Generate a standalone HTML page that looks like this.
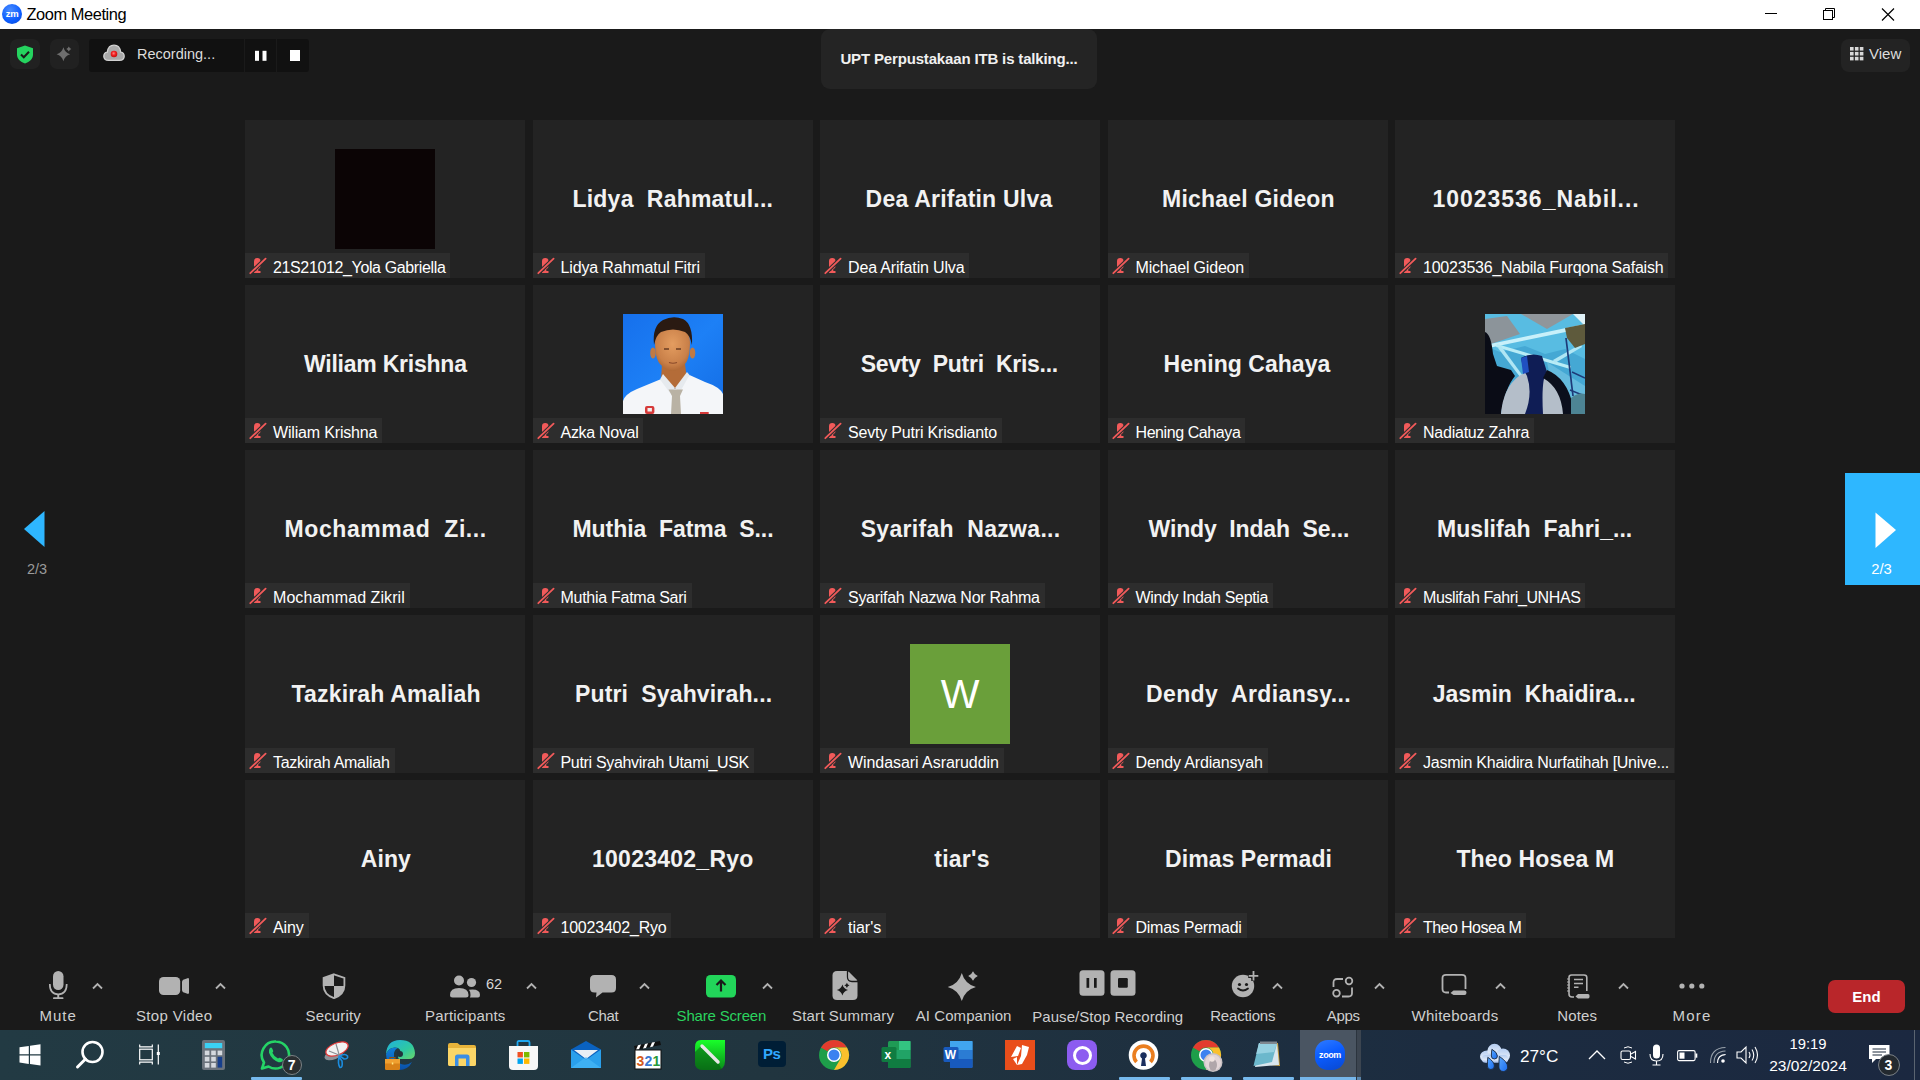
<!DOCTYPE html>
<html><head><meta charset="utf-8"><title>Zoom Meeting</title>
<style>
*{box-sizing:border-box}
html,body{margin:0;padding:0;width:1920px;height:1080px;overflow:hidden;background:#1a1a1a;font-family:'Liberation Sans',sans-serif;}
.ab{position:absolute}
.tile{position:absolute;width:280px;height:158px;background:#232323}
.ph{position:absolute;left:90px;top:29px;width:100px;height:100px;overflow:hidden;font-family:'Liberation Sans',sans-serif;}
.bn{position:absolute;top:62px;color:#f2f2f2;font-weight:bold;font-size:23px;line-height:34px;white-space:nowrap}
.lb{position:absolute;left:0;top:133px;height:25px;background:#2d2d2d;padding:1.5px 5px 0 28px;color:#fff;font-size:16px;line-height:25px;white-space:nowrap}
.mm{position:absolute;left:4px;top:4px}
.tl{position:absolute;font-size:15px;line-height:20px;white-space:nowrap}
</style></head><body>
<!-- title bar -->
<div class="ab" style="left:0;top:0;width:1920px;height:29px;background:#fff"></div>
<div class="ab" style="left:2px;top:4px;width:20px;height:20px;border-radius:50%;background:radial-gradient(circle at 40% 30%,#4a8cff,#0b5cff 60%,#0845c8);color:#fff;font-size:9.5px;line-height:20px;text-align:center;font-weight:bold;letter-spacing:-0.3px">zm</div>
<div class="ab" style="left:26.5px;top:5px;font-size:16.4px;letter-spacing:-0.42px;line-height:18px;color:#000">Zoom Meeting</div>
<svg class="ab" style="left:1760px;top:8px" width="140" height="14" viewBox="0 0 140 14">
<line x1="5" y1="5.5" x2="17" y2="5.5" stroke="#000" stroke-width="1"/>
<rect x="63.5" y="2.5" width="9" height="9" fill="none" stroke="#000" stroke-width="1"/>
<path d="M65.5 2.5 V0.5 H74.5 V9.5 H72.5" fill="none" stroke="#000" stroke-width="1"/>
<path d="M122 0.5 L134 12.5 M134 0.5 L122 12.5" stroke="#000" stroke-width="1.15"/></svg>

<!-- top bar -->
<div class="ab" style="left:10px;top:39px;width:30px;height:30px;border-radius:7px;background:#212121"></div>
<svg class="ab" style="left:16px;top:45px" width="18" height="19" viewBox="0 0 18 19">
<path d="M9 0.5 L17 3.3 V9.5 C17 13.8 13.8 16.8 9 18.5 C4.2 16.8 1 13.8 1 9.5 V3.3 Z" fill="#25d35f"/>
<path d="M5 9.5 L7.8 12.3 L13 6.8" stroke="#1a1a1a" stroke-width="2" fill="none"/></svg>
<div class="ab" style="left:50px;top:39px;width:29px;height:30px;border-radius:7px;background:#212121"></div>
<svg class="ab" style="left:55px;top:45px" width="20" height="19" viewBox="0 0 20 19">
<path d="M8.40 2.30 Q9.90 7.76 15.20 9.30 Q9.90 10.84 8.40 16.30 Q6.90 10.84 1.60 9.30 Q6.90 7.76 8.40 2.30 Z" fill="#6e6e6e"/>
<path d="M13.80 1.40 Q14.55 3.15 16.30 3.90 Q14.55 4.65 13.80 6.40 Q13.05 4.65 11.30 3.90 Q13.05 3.15 13.80 1.40 Z" fill="#6e6e6e"/></svg>
<div class="ab" style="left:89px;top:39px;width:220px;height:33px;border-radius:3px;background:#111111"></div>
<div class="ab" style="left:244px;top:39px;width:1px;height:33px;background:#1a1a1a"></div>
<div class="ab" style="left:276px;top:39px;width:1px;height:33px;background:#1a1a1a"></div>
<svg class="ab" style="left:101.5px;top:44px" width="24" height="18" viewBox="0 0 24 18">
<defs><radialGradient id="rdot" cx="0.45" cy="0.4" r="0.6"><stop offset="0" stop-color="#ff8080"/><stop offset="0.5" stop-color="#f02020"/><stop offset="1" stop-color="#c01010"/></radialGradient></defs>
<path d="M6.5 16.3 Q1.8 16.3 1.8 12.2 Q1.8 8.6 5.3 8.1 Q6.3 1.2 12 1.2 Q17.7 1.2 18.7 8.1 Q22.2 8.6 22.2 12.2 Q22.2 16.3 17.5 16.3 Z" fill="#a9a9a9" stroke="#d2d2d2" stroke-width="1.3"/>
<circle cx="12" cy="10" r="3.3" fill="url(#rdot)"/></svg>
<div class="ab" style="left:137px;top:45px;font-size:14.5px;line-height:18px;color:#dcdcdc">Recording...</div>
<svg class="ab" style="left:254px;top:50px" width="14" height="12" viewBox="0 0 14 12">
<rect x="1" y="0.8" width="4" height="10" fill="#fff"/><rect x="8.5" y="0.8" width="4" height="10" fill="#fff"/></svg>
<div class="ab" style="left:289.5px;top:50px;width:10.5px;height:10.5px;background:#fff"></div>

<div class="ab" style="left:821px;top:29px;width:276px;height:60px;border-radius:9px;background:#242424"></div>
<div class="ab" style="left:821px;top:49px;width:276px;text-align:center;font-weight:bold;font-size:15px;letter-spacing:-0.16px;line-height:20px;color:#f0f0f0">UPT Perpustakaan ITB is talking...</div>

<div class="ab" style="left:1841px;top:39px;width:69px;height:33px;border-radius:8px;background:#232323"></div>
<svg class="ab" style="left:1850px;top:46.5px" width="14" height="14" viewBox="0 0 14 14">
<g fill="#d8d8d8"><rect x="0" y="0" width="3.6" height="3.6"/><rect x="4.9" y="0" width="3.6" height="3.6"/><rect x="9.8" y="0" width="3.6" height="3.6"/>
<rect x="0" y="4.9" width="3.6" height="3.6"/><rect x="4.9" y="4.9" width="3.6" height="3.6"/><rect x="9.8" y="4.9" width="3.6" height="3.6"/>
<rect x="0" y="9.8" width="3.6" height="3.6"/><rect x="4.9" y="9.8" width="3.6" height="3.6"/><rect x="9.8" y="9.8" width="3.6" height="3.6"/></g></svg>
<div class="ab" style="left:1869px;top:45px;font-size:15px;line-height:18px;color:#dcdcdc">View</div>

<!-- tiles -->
<div class="tile" style="left:245.0px;top:120px"><div class="ph" style="background:#0b0405"></div><div class="lb"><svg class="mm" width="18" height="18" viewBox="0 0 18 18"><rect x="5" y="1" width="6.5" height="11" rx="3.2" fill="#f25a5a"/><rect x="5" y="14" width="6.5" height="2" fill="#f25a5a"/><rect x="7.3" y="11" width="2" height="4" fill="#f25a5a"/><line x1="1.3" y1="16.2" x2="16.6" y2="1.6" stroke="#2d2d2d" stroke-width="4"/><line x1="1.3" y1="16.2" x2="16.6" y2="1.6" stroke="#f25a5a" stroke-width="1.8" stroke-linecap="round"/></svg><span style="letter-spacing:-0.368px">21S21012_Yola Gabriella</span></div></div><div class="tile" style="left:532.5px;top:120px"><div class="bn" style="left:40.00px;letter-spacing:0.212px">Lidya&nbsp; Rahmatul...</div><div class="lb"><svg class="mm" width="18" height="18" viewBox="0 0 18 18"><rect x="5" y="1" width="6.5" height="11" rx="3.2" fill="#f25a5a"/><rect x="5" y="14" width="6.5" height="2" fill="#f25a5a"/><rect x="7.3" y="11" width="2" height="4" fill="#f25a5a"/><line x1="1.3" y1="16.2" x2="16.6" y2="1.6" stroke="#2d2d2d" stroke-width="4"/><line x1="1.3" y1="16.2" x2="16.6" y2="1.6" stroke="#f25a5a" stroke-width="1.8" stroke-linecap="round"/></svg><span style="letter-spacing:-0.145px">Lidya Rahmatul Fitri</span></div></div><div class="tile" style="left:820.0px;top:120px"><div class="bn" style="left:45.60px;letter-spacing:0.213px">Dea Arifatin Ulva</div><div class="lb"><svg class="mm" width="18" height="18" viewBox="0 0 18 18"><rect x="5" y="1" width="6.5" height="11" rx="3.2" fill="#f25a5a"/><rect x="5" y="14" width="6.5" height="2" fill="#f25a5a"/><rect x="7.3" y="11" width="2" height="4" fill="#f25a5a"/><line x1="1.3" y1="16.2" x2="16.6" y2="1.6" stroke="#2d2d2d" stroke-width="4"/><line x1="1.3" y1="16.2" x2="16.6" y2="1.6" stroke="#f25a5a" stroke-width="1.8" stroke-linecap="round"/></svg><span style="letter-spacing:-0.162px">Dea Arifatin Ulva</span></div></div><div class="tile" style="left:1107.5px;top:120px"><div class="bn" style="left:54.60px;letter-spacing:0.200px">Michael Gideon</div><div class="lb"><svg class="mm" width="18" height="18" viewBox="0 0 18 18"><rect x="5" y="1" width="6.5" height="11" rx="3.2" fill="#f25a5a"/><rect x="5" y="14" width="6.5" height="2" fill="#f25a5a"/><rect x="7.3" y="11" width="2" height="4" fill="#f25a5a"/><line x1="1.3" y1="16.2" x2="16.6" y2="1.6" stroke="#2d2d2d" stroke-width="4"/><line x1="1.3" y1="16.2" x2="16.6" y2="1.6" stroke="#f25a5a" stroke-width="1.8" stroke-linecap="round"/></svg><span style="letter-spacing:-0.188px">Michael Gideon</span></div></div><div class="tile" style="left:1395.0px;top:120px"><div class="bn" style="left:37.40px;letter-spacing:0.988px">10023536_Nabil...</div><div class="lb"><svg class="mm" width="18" height="18" viewBox="0 0 18 18"><rect x="5" y="1" width="6.5" height="11" rx="3.2" fill="#f25a5a"/><rect x="5" y="14" width="6.5" height="2" fill="#f25a5a"/><rect x="7.3" y="11" width="2" height="4" fill="#f25a5a"/><line x1="1.3" y1="16.2" x2="16.6" y2="1.6" stroke="#2d2d2d" stroke-width="4"/><line x1="1.3" y1="16.2" x2="16.6" y2="1.6" stroke="#f25a5a" stroke-width="1.8" stroke-linecap="round"/></svg><span style="letter-spacing:-0.223px">10023536_Nabila Furqona Safaish</span></div></div><div class="tile" style="left:245.0px;top:285px"><div class="bn" style="left:59.00px;letter-spacing:-0.231px">Wiliam Krishna</div><div class="lb"><svg class="mm" width="18" height="18" viewBox="0 0 18 18"><rect x="5" y="1" width="6.5" height="11" rx="3.2" fill="#f25a5a"/><rect x="5" y="14" width="6.5" height="2" fill="#f25a5a"/><rect x="7.3" y="11" width="2" height="4" fill="#f25a5a"/><line x1="1.3" y1="16.2" x2="16.6" y2="1.6" stroke="#2d2d2d" stroke-width="4"/><line x1="1.3" y1="16.2" x2="16.6" y2="1.6" stroke="#f25a5a" stroke-width="1.8" stroke-linecap="round"/></svg><span style="letter-spacing:-0.173px">Wiliam Krishna</span></div></div><div class="tile" style="left:532.5px;top:285px"><div class="ph" style="background:#1b7af0"><svg width="100" height="100" viewBox="0 0 100 100" style="filter:blur(0.5px)"><defs><linearGradient id="azbg" x1="0" y1="0" x2="1" y2="1"><stop offset="0" stop-color="#1670ec"/><stop offset="0.5" stop-color="#1d80f6"/><stop offset="1" stop-color="#136ce4"/></linearGradient><radialGradient id="azsk" cx="0.5" cy="0.4" r="0.65"><stop offset="0" stop-color="#e49d60"/><stop offset="0.7" stop-color="#c98049"/><stop offset="1" stop-color="#a8622f"/></radialGradient></defs><rect width="100" height="100" fill="url(#azbg)"/><path d="M39 50 L62 50 L64 66 L52 75 L38 66 Z" fill="#b46c38"/><path d="M0 100 L0 87 Q2 80 14 75 L37 65.5 L52 75 L66.5 61 L82 68 Q97 73 100 80 L100 100 Z" fill="#f4f6f9"/><path d="M37 65.5 L40 60 L52 74 L47 79 Z" fill="#e6eaee"/><path d="M66.5 61 L64 58 L52 74 L57 78 Z" fill="#e6eaee"/><path d="M45.5 75.5 L60 75.5 L57 82 L58 100 L48 100 L49 82 Z" fill="#b9b2a4"/><ellipse cx="30" cy="39" rx="2.8" ry="5.5" fill="#c07a44"/><ellipse cx="69.5" cy="39" rx="2.8" ry="5.5" fill="#c07a44"/><path d="M32 28 Q32 46 38 51 Q44 57 49.5 57 Q55 57 61 51 Q67 46 67 28 Q67 12 49.5 12 Q32 12 32 28 Z" fill="url(#azsk)"/><path d="M31 31 Q29 12 40 6 Q50 1 60 5 Q70 10 69 31 Q67 21 62 18 Q50 13 38 18 Q33 21 31 31 Z" fill="#2a1a12"/><path d="M41 35 H46 M53 35 H58" stroke="#6a3c22" stroke-width="1.4"/><path d="M46 48.5 Q50 50 54 48.5" stroke="#8a4a2a" stroke-width="1.1" fill="none"/><rect x="22" y="92" width="9.4" height="8" rx="2" fill="#d63a3a"/><rect x="24.5" y="94" width="4.4" height="3.5" fill="#f0f0f0"/><rect x="77" y="98" width="8.7" height="2" fill="#d63a3a"/></svg></div><div class="lb"><svg class="mm" width="18" height="18" viewBox="0 0 18 18"><rect x="5" y="1" width="6.5" height="11" rx="3.2" fill="#f25a5a"/><rect x="5" y="14" width="6.5" height="2" fill="#f25a5a"/><rect x="7.3" y="11" width="2" height="4" fill="#f25a5a"/><line x1="1.3" y1="16.2" x2="16.6" y2="1.6" stroke="#2d2d2d" stroke-width="4"/><line x1="1.3" y1="16.2" x2="16.6" y2="1.6" stroke="#f25a5a" stroke-width="1.8" stroke-linecap="round"/></svg><span style="letter-spacing:-0.294px">Azka Noval</span></div></div><div class="tile" style="left:820.0px;top:285px"><div class="bn" style="left:40.70px;letter-spacing:-0.290px">Sevty&nbsp; Putri&nbsp; Kris...</div><div class="lb"><svg class="mm" width="18" height="18" viewBox="0 0 18 18"><rect x="5" y="1" width="6.5" height="11" rx="3.2" fill="#f25a5a"/><rect x="5" y="14" width="6.5" height="2" fill="#f25a5a"/><rect x="7.3" y="11" width="2" height="4" fill="#f25a5a"/><line x1="1.3" y1="16.2" x2="16.6" y2="1.6" stroke="#2d2d2d" stroke-width="4"/><line x1="1.3" y1="16.2" x2="16.6" y2="1.6" stroke="#f25a5a" stroke-width="1.8" stroke-linecap="round"/></svg><span style="letter-spacing:-0.183px">Sevty Putri Krisdianto</span></div></div><div class="tile" style="left:1107.5px;top:285px"><div class="bn" style="left:56.10px;letter-spacing:0.050px">Hening Cahaya</div><div class="lb"><svg class="mm" width="18" height="18" viewBox="0 0 18 18"><rect x="5" y="1" width="6.5" height="11" rx="3.2" fill="#f25a5a"/><rect x="5" y="14" width="6.5" height="2" fill="#f25a5a"/><rect x="7.3" y="11" width="2" height="4" fill="#f25a5a"/><line x1="1.3" y1="16.2" x2="16.6" y2="1.6" stroke="#2d2d2d" stroke-width="4"/><line x1="1.3" y1="16.2" x2="16.6" y2="1.6" stroke="#f25a5a" stroke-width="1.8" stroke-linecap="round"/></svg><span style="letter-spacing:-0.417px">Hening Cahaya</span></div></div><div class="tile" style="left:1395.0px;top:285px"><div class="ph" style="background:#49aad4"><svg width="100" height="100" viewBox="0 0 100 100" style="filter:blur(0.5px)"><rect width="100" height="100" fill="#45a8d4"/><path d="M0 0 H100 V45 L80 35 L60 40 L40 32 L15 38 L0 32 Z" fill="#58bce2"/><path d="M0 5 L22 2 L35 20 L6 30 L0 28 Z" fill="#8c949a"/><path d="M36 0 L88 0 L62 15 Z" fill="#90969b"/><path d="M88 0 H100 V12 Z" fill="#e0f2f8"/><path d="M5 30 L100 10 L100 14 L6 33.5 Z" fill="#c8f0fa"/><path d="M12 30 L86 52 L85 55 L11 33 Z" fill="#b8ecf6"/><path d="M16 32 L38 62 L35 63 L13 34 Z" fill="#b0e6f4"/><path d="M68 46 L96 30 L97 33 L70 49 Z" fill="#b0e6f4"/><path d="M62 48 L100 72 L100 100 L72 100 Z" fill="#7fcbe6" opacity="0.55"/><path d="M80 14 L100 10 L100 30 L90 34 L82 24 Z" fill="#5e5a3c"/><path d="M81 24 L88 82" stroke="#1d3a78" stroke-width="1.7"/><path d="M87 58 L100 64 M85 76 L100 82" stroke="#1d3a78" stroke-width="1.4"/><path d="M0 18 Q6 20 8 40 L12 52 L26 56 L30 62 Q20 74 16 100 L0 100 Z" fill="#0a0c16"/><path d="M16 100 Q18 74 34 62 Q50 52 66 58 Q84 70 86 100 Z" fill="#b4bec9"/><path d="M36 44 Q46 38 57 42 L62 58 Q56 64 58 100 L40 100 Q48 80 42 62 Q38 56 36 44 Z" fill="#0f1d55"/><path d="M36 44 L42 42 L44 58 L38 60 Z" fill="#2050c0"/><path d="M62 56 Q82 64 88 92 L86 100 L78 100 Q76 74 58 64 Z" fill="#0b0f1c"/><path d="M86 84 Q93 78 100 80 L100 100 L86 100 Z" fill="#4d8494"/></svg></div><div class="lb"><svg class="mm" width="18" height="18" viewBox="0 0 18 18"><rect x="5" y="1" width="6.5" height="11" rx="3.2" fill="#f25a5a"/><rect x="5" y="14" width="6.5" height="2" fill="#f25a5a"/><rect x="7.3" y="11" width="2" height="4" fill="#f25a5a"/><line x1="1.3" y1="16.2" x2="16.6" y2="1.6" stroke="#2d2d2d" stroke-width="4"/><line x1="1.3" y1="16.2" x2="16.6" y2="1.6" stroke="#f25a5a" stroke-width="1.8" stroke-linecap="round"/></svg><span style="letter-spacing:-0.235px">Nadiatuz Zahra</span></div></div><div class="tile" style="left:245.0px;top:450px"><div class="bn" style="left:39.60px;letter-spacing:0.573px">Mochammad&nbsp; Zi...</div><div class="lb"><svg class="mm" width="18" height="18" viewBox="0 0 18 18"><rect x="5" y="1" width="6.5" height="11" rx="3.2" fill="#f25a5a"/><rect x="5" y="14" width="6.5" height="2" fill="#f25a5a"/><rect x="7.3" y="11" width="2" height="4" fill="#f25a5a"/><line x1="1.3" y1="16.2" x2="16.6" y2="1.6" stroke="#2d2d2d" stroke-width="4"/><line x1="1.3" y1="16.2" x2="16.6" y2="1.6" stroke="#f25a5a" stroke-width="1.8" stroke-linecap="round"/></svg><span style="letter-spacing:0.070px">Mochammad Zikril</span></div></div><div class="tile" style="left:532.5px;top:450px"><div class="bn" style="left:40.00px;letter-spacing:-0.046px">Muthia&nbsp; Fatma&nbsp; S...</div><div class="lb"><svg class="mm" width="18" height="18" viewBox="0 0 18 18"><rect x="5" y="1" width="6.5" height="11" rx="3.2" fill="#f25a5a"/><rect x="5" y="14" width="6.5" height="2" fill="#f25a5a"/><rect x="7.3" y="11" width="2" height="4" fill="#f25a5a"/><line x1="1.3" y1="16.2" x2="16.6" y2="1.6" stroke="#2d2d2d" stroke-width="4"/><line x1="1.3" y1="16.2" x2="16.6" y2="1.6" stroke="#f25a5a" stroke-width="1.8" stroke-linecap="round"/></svg><span style="letter-spacing:-0.275px">Muthia Fatma Sari</span></div></div><div class="tile" style="left:820.0px;top:450px"><div class="bn" style="left:40.70px;letter-spacing:0.306px">Syarifah&nbsp; Nazwa...</div><div class="lb"><svg class="mm" width="18" height="18" viewBox="0 0 18 18"><rect x="5" y="1" width="6.5" height="11" rx="3.2" fill="#f25a5a"/><rect x="5" y="14" width="6.5" height="2" fill="#f25a5a"/><rect x="7.3" y="11" width="2" height="4" fill="#f25a5a"/><line x1="1.3" y1="16.2" x2="16.6" y2="1.6" stroke="#2d2d2d" stroke-width="4"/><line x1="1.3" y1="16.2" x2="16.6" y2="1.6" stroke="#f25a5a" stroke-width="1.8" stroke-linecap="round"/></svg><span style="letter-spacing:-0.276px">Syarifah Nazwa Nor Rahma</span></div></div><div class="tile" style="left:1107.5px;top:450px"><div class="bn" style="left:41.00px;letter-spacing:-0.122px">Windy&nbsp; Indah&nbsp; Se...</div><div class="lb"><svg class="mm" width="18" height="18" viewBox="0 0 18 18"><rect x="5" y="1" width="6.5" height="11" rx="3.2" fill="#f25a5a"/><rect x="5" y="14" width="6.5" height="2" fill="#f25a5a"/><rect x="7.3" y="11" width="2" height="4" fill="#f25a5a"/><line x1="1.3" y1="16.2" x2="16.6" y2="1.6" stroke="#2d2d2d" stroke-width="4"/><line x1="1.3" y1="16.2" x2="16.6" y2="1.6" stroke="#f25a5a" stroke-width="1.8" stroke-linecap="round"/></svg><span style="letter-spacing:-0.344px">Windy Indah Septia</span></div></div><div class="tile" style="left:1395.0px;top:450px"><div class="bn" style="left:42.00px;letter-spacing:0.056px">Muslifah&nbsp; Fahri_...</div><div class="lb"><svg class="mm" width="18" height="18" viewBox="0 0 18 18"><rect x="5" y="1" width="6.5" height="11" rx="3.2" fill="#f25a5a"/><rect x="5" y="14" width="6.5" height="2" fill="#f25a5a"/><rect x="7.3" y="11" width="2" height="4" fill="#f25a5a"/><line x1="1.3" y1="16.2" x2="16.6" y2="1.6" stroke="#2d2d2d" stroke-width="4"/><line x1="1.3" y1="16.2" x2="16.6" y2="1.6" stroke="#f25a5a" stroke-width="1.8" stroke-linecap="round"/></svg><span style="letter-spacing:-0.397px">Muslifah Fahri_UNHAS</span></div></div><div class="tile" style="left:245.0px;top:615px"><div class="bn" style="left:46.60px;letter-spacing:0.160px">Tazkirah Amaliah</div><div class="lb"><svg class="mm" width="18" height="18" viewBox="0 0 18 18"><rect x="5" y="1" width="6.5" height="11" rx="3.2" fill="#f25a5a"/><rect x="5" y="14" width="6.5" height="2" fill="#f25a5a"/><rect x="7.3" y="11" width="2" height="4" fill="#f25a5a"/><line x1="1.3" y1="16.2" x2="16.6" y2="1.6" stroke="#2d2d2d" stroke-width="4"/><line x1="1.3" y1="16.2" x2="16.6" y2="1.6" stroke="#f25a5a" stroke-width="1.8" stroke-linecap="round"/></svg><span style="letter-spacing:-0.277px">Tazkirah Amaliah</span></div></div><div class="tile" style="left:532.5px;top:615px"><div class="bn" style="left:42.50px;letter-spacing:0.156px">Putri&nbsp; Syahvirah...</div><div class="lb"><svg class="mm" width="18" height="18" viewBox="0 0 18 18"><rect x="5" y="1" width="6.5" height="11" rx="3.2" fill="#f25a5a"/><rect x="5" y="14" width="6.5" height="2" fill="#f25a5a"/><rect x="7.3" y="11" width="2" height="4" fill="#f25a5a"/><line x1="1.3" y1="16.2" x2="16.6" y2="1.6" stroke="#2d2d2d" stroke-width="4"/><line x1="1.3" y1="16.2" x2="16.6" y2="1.6" stroke="#f25a5a" stroke-width="1.8" stroke-linecap="round"/></svg><span style="letter-spacing:-0.325px">Putri Syahvirah Utami_USK</span></div></div><div class="tile" style="left:820.0px;top:615px"><div class="ph" style="background:#6a9f3a;color:#fff;font-size:41px;line-height:100px;text-align:center">W</div><div class="lb"><svg class="mm" width="18" height="18" viewBox="0 0 18 18"><rect x="5" y="1" width="6.5" height="11" rx="3.2" fill="#f25a5a"/><rect x="5" y="14" width="6.5" height="2" fill="#f25a5a"/><rect x="7.3" y="11" width="2" height="4" fill="#f25a5a"/><line x1="1.3" y1="16.2" x2="16.6" y2="1.6" stroke="#2d2d2d" stroke-width="4"/><line x1="1.3" y1="16.2" x2="16.6" y2="1.6" stroke="#f25a5a" stroke-width="1.8" stroke-linecap="round"/></svg><span style="letter-spacing:-0.061px">Windasari Asraruddin</span></div></div><div class="tile" style="left:1107.5px;top:615px"><div class="bn" style="left:38.50px;letter-spacing:0.388px">Dendy&nbsp; Ardiansy...</div><div class="lb"><svg class="mm" width="18" height="18" viewBox="0 0 18 18"><rect x="5" y="1" width="6.5" height="11" rx="3.2" fill="#f25a5a"/><rect x="5" y="14" width="6.5" height="2" fill="#f25a5a"/><rect x="7.3" y="11" width="2" height="4" fill="#f25a5a"/><line x1="1.3" y1="16.2" x2="16.6" y2="1.6" stroke="#2d2d2d" stroke-width="4"/><line x1="1.3" y1="16.2" x2="16.6" y2="1.6" stroke="#f25a5a" stroke-width="1.8" stroke-linecap="round"/></svg><span style="letter-spacing:-0.170px">Dendy Ardiansyah</span></div></div><div class="tile" style="left:1395.0px;top:615px"><div class="bn" style="left:37.70px;letter-spacing:-0.011px">Jasmin&nbsp; Khaidira...</div><div class="lb"><svg class="mm" width="18" height="18" viewBox="0 0 18 18"><rect x="5" y="1" width="6.5" height="11" rx="3.2" fill="#f25a5a"/><rect x="5" y="14" width="6.5" height="2" fill="#f25a5a"/><rect x="7.3" y="11" width="2" height="4" fill="#f25a5a"/><line x1="1.3" y1="16.2" x2="16.6" y2="1.6" stroke="#2d2d2d" stroke-width="4"/><line x1="1.3" y1="16.2" x2="16.6" y2="1.6" stroke="#f25a5a" stroke-width="1.8" stroke-linecap="round"/></svg><span style="letter-spacing:-0.256px">Jasmin Khaidira Nurfatihah [Unive...</span></div></div><div class="tile" style="left:245.0px;top:780px"><div class="bn" style="left:115.80px;letter-spacing:0.067px">Ainy</div><div class="lb"><svg class="mm" width="18" height="18" viewBox="0 0 18 18"><rect x="5" y="1" width="6.5" height="11" rx="3.2" fill="#f25a5a"/><rect x="5" y="14" width="6.5" height="2" fill="#f25a5a"/><rect x="7.3" y="11" width="2" height="4" fill="#f25a5a"/><line x1="1.3" y1="16.2" x2="16.6" y2="1.6" stroke="#2d2d2d" stroke-width="4"/><line x1="1.3" y1="16.2" x2="16.6" y2="1.6" stroke="#f25a5a" stroke-width="1.8" stroke-linecap="round"/></svg><span style="letter-spacing:-0.117px">Ainy</span></div></div><div class="tile" style="left:532.5px;top:780px"><div class="bn" style="left:59.50px;letter-spacing:0.255px">10023402_Ryo</div><div class="lb"><svg class="mm" width="18" height="18" viewBox="0 0 18 18"><rect x="5" y="1" width="6.5" height="11" rx="3.2" fill="#f25a5a"/><rect x="5" y="14" width="6.5" height="2" fill="#f25a5a"/><rect x="7.3" y="11" width="2" height="4" fill="#f25a5a"/><line x1="1.3" y1="16.2" x2="16.6" y2="1.6" stroke="#2d2d2d" stroke-width="4"/><line x1="1.3" y1="16.2" x2="16.6" y2="1.6" stroke="#f25a5a" stroke-width="1.8" stroke-linecap="round"/></svg><span style="letter-spacing:-0.214px">10023402_Ryo</span></div></div><div class="tile" style="left:820.0px;top:780px"><div class="bn" style="left:114.20px;letter-spacing:0.280px">tiar's</div><div class="lb"><svg class="mm" width="18" height="18" viewBox="0 0 18 18"><rect x="5" y="1" width="6.5" height="11" rx="3.2" fill="#f25a5a"/><rect x="5" y="14" width="6.5" height="2" fill="#f25a5a"/><rect x="7.3" y="11" width="2" height="4" fill="#f25a5a"/><line x1="1.3" y1="16.2" x2="16.6" y2="1.6" stroke="#2d2d2d" stroke-width="4"/><line x1="1.3" y1="16.2" x2="16.6" y2="1.6" stroke="#f25a5a" stroke-width="1.8" stroke-linecap="round"/></svg><span style="letter-spacing:-0.010px">tiar's</span></div></div><div class="tile" style="left:1107.5px;top:780px"><div class="bn" style="left:57.60px;letter-spacing:0.050px">Dimas Permadi</div><div class="lb"><svg class="mm" width="18" height="18" viewBox="0 0 18 18"><rect x="5" y="1" width="6.5" height="11" rx="3.2" fill="#f25a5a"/><rect x="5" y="14" width="6.5" height="2" fill="#f25a5a"/><rect x="7.3" y="11" width="2" height="4" fill="#f25a5a"/><line x1="1.3" y1="16.2" x2="16.6" y2="1.6" stroke="#2d2d2d" stroke-width="4"/><line x1="1.3" y1="16.2" x2="16.6" y2="1.6" stroke="#f25a5a" stroke-width="1.8" stroke-linecap="round"/></svg><span style="letter-spacing:-0.250px">Dimas Permadi</span></div></div><div class="tile" style="left:1395.0px;top:780px"><div class="bn" style="left:61.40px;letter-spacing:0.164px">Theo Hosea M</div><div class="lb"><svg class="mm" width="18" height="18" viewBox="0 0 18 18"><rect x="5" y="1" width="6.5" height="11" rx="3.2" fill="#f25a5a"/><rect x="5" y="14" width="6.5" height="2" fill="#f25a5a"/><rect x="7.3" y="11" width="2" height="4" fill="#f25a5a"/><line x1="1.3" y1="16.2" x2="16.6" y2="1.6" stroke="#2d2d2d" stroke-width="4"/><line x1="1.3" y1="16.2" x2="16.6" y2="1.6" stroke="#f25a5a" stroke-width="1.8" stroke-linecap="round"/></svg><span style="letter-spacing:-0.559px">Theo Hosea M</span></div></div>

<!-- side nav -->
<svg class="ab" style="left:23px;top:510px" width="23" height="38" viewBox="0 0 23 38"><path d="M1 19 L21.5 1 V37 Z" fill="#2eb6ff"/></svg>
<div class="ab" style="left:17px;top:560px;width:40px;text-align:center;font-size:14.5px;line-height:18px;color:#9a9a9a">2/3</div>
<div class="ab" style="left:1845px;top:473px;width:75px;height:112px;background:#2eb7ff"></div>
<svg class="ab" style="left:1874px;top:511px" width="24" height="38" viewBox="0 0 24 38"><path d="M1.5 1.5 V37 L22 19 Z" fill="#fff"/></svg>
<div class="ab" style="left:1861.5px;top:560px;width:40px;text-align:center;font-size:14.8px;line-height:18px;color:#fff">2/3</div>

<!-- toolbar -->
<svg class="ab" style="left:47px;top:970px" width="22" height="30" viewBox="0 0 22 30">
<rect x="6" y="1" width="10.5" height="19" rx="5.25" fill="#b2b2b2"/>
<path d="M2.8 14 Q2.8 24.3 11.25 24.3 Q19.7 24.3 19.7 14" stroke="#b2b2b2" stroke-width="1.7" fill="none"/>
<rect x="10.3" y="24" width="1.9" height="4.5" fill="#b2b2b2"/><rect x="6" y="27.2" width="10.5" height="1.9" rx="0.9" fill="#b2b2b2"/></svg><div class="tl" style="left:39.50px;top:1006px;color:#cfcfcf;letter-spacing:1.000px">Mute</div><svg class="ab" style="left:92px;top:982px" width="11" height="8" viewBox="0 0 11 8"><path d="M1 6.5 L5.5 2 L10 6.5" stroke="#b2b2b2" stroke-width="1.8" fill="none"/></svg><svg class="ab" style="left:158px;top:976px" width="32" height="20" viewBox="0 0 32 20">
<rect x="1" y="1" width="21.2" height="18" rx="4.5" fill="#b2b2b2"/><path d="M24 6 Q24 4.5 25.2 3.8 L29.5 2.2 Q31 1.8 31 3.5 L31 16.5 Q31 18.2 29.5 17.8 L25.2 16.2 Q24 15.5 24 14 Z" fill="#b2b2b2"/></svg><div class="tl" style="left:136.00px;top:1006px;color:#cfcfcf;letter-spacing:0.333px">Stop Video</div><svg class="ab" style="left:215px;top:982px" width="11" height="8" viewBox="0 0 11 8"><path d="M1 6.5 L5.5 2 L10 6.5" stroke="#b2b2b2" stroke-width="1.8" fill="none"/></svg><svg class="ab" style="left:322px;top:973px" width="24" height="26" viewBox="0 0 24 26">
<path d="M12 1.3 L22.4 4.9 V12.5 C22.4 18.8 17.6 23.2 12 25.2 C6.4 23.2 1.6 18.8 1.6 12.5 V4.9 Z" stroke="#b2b2b2" stroke-width="1.8" fill="none"/>
<path d="M12 1.3 V13 H1.6 V4.9 Z" fill="#b2b2b2"/><path d="M12 13 H22.4 C22.4 18.8 17.6 23.2 12 25.2 Z" fill="#b2b2b2"/></svg><div class="tl" style="left:305.50px;top:1006px;color:#cfcfcf;letter-spacing:0.143px">Security</div><svg class="ab" style="left:449px;top:975px" width="32" height="23" viewBox="0 0 32 23">
<circle cx="10" cy="5.5" r="5" fill="#b2b2b2"/><path d="M1 20 Q1 13 10 13 Q19.5 13 19.5 20 Q19.5 22.5 17 22.5 L3.5 22.5 Q1 22.5 1 20 Z" fill="#b2b2b2"/>
<circle cx="22.5" cy="7.5" r="4.6" fill="#b2b2b2"/><path d="M20.8 22.5 Q21.5 21.5 21.5 20 Q21.5 16.5 20 14.8 Q21 14.5 23.5 14.5 Q31 14.5 31 20 Q31 22.5 29 22.5 Z" fill="#b2b2b2"/></svg><div class="ab" style="left:486px;top:975.5px;font-size:14.5px;color:#d6d6d6;font-family:'Liberation Sans',sans-serif;">62</div><div class="tl" style="left:425.00px;top:1006px;color:#cfcfcf;letter-spacing:0.182px">Participants</div><svg class="ab" style="left:526px;top:982px" width="11" height="8" viewBox="0 0 11 8"><path d="M1 6.5 L5.5 2 L10 6.5" stroke="#b2b2b2" stroke-width="1.8" fill="none"/></svg><svg class="ab" style="left:589px;top:974px" width="28" height="24" viewBox="0 0 28 24">
<path d="M5.5 1 H22.5 Q27 1 27 5.5 V14 Q27 18.5 22.5 18.5 H13.5 L7 23.5 L7.5 18.5 H5.5 Q1 18.5 1 14 V5.5 Q1 1 5.5 1 Z" fill="#b2b2b2"/></svg><div class="tl" style="left:588.00px;top:1006px;color:#cfcfcf;letter-spacing:-0.333px">Chat</div><svg class="ab" style="left:639px;top:982px" width="11" height="8" viewBox="0 0 11 8"><path d="M1 6.5 L5.5 2 L10 6.5" stroke="#b2b2b2" stroke-width="1.8" fill="none"/></svg><svg class="ab" style="left:705px;top:974px" width="32" height="24" viewBox="0 0 32 24">
<rect x="1" y="1" width="30" height="22.5" rx="4.5" fill="#22d55a"/>
<path d="M16 17.5 V7 M11.5 11 L16 6.5 L20.5 11" stroke="#1a1a1a" stroke-width="2.2" fill="none"/></svg><div class="tl" style="left:676.60px;top:1006px;color:#2bd35f;letter-spacing:-0.182px">Share Screen</div><svg class="ab" style="left:762px;top:982px" width="11" height="8" viewBox="0 0 11 8"><path d="M1 6.5 L5.5 2 L10 6.5" stroke="#b2b2b2" stroke-width="1.8" fill="none"/></svg><svg class="ab" style="left:831px;top:970px" width="28" height="31" viewBox="0 0 28 31">
<path d="M6 1 H16.5 L26.5 11 V25.5 Q26.5 30 22 30 H6 Q1.5 30 1.5 25.5 V5.5 Q1.5 1 6 1 Z" fill="#b2b2b2"/>
<path d="M16.5 0 V7 Q16.5 11.5 21 11.5 H28" stroke="#1a1a1a" stroke-width="1.3" fill="none"/>
<path d="M17.5 1.5 L26 10 H21 Q17.5 10 17.5 6.5 Z" fill="#b2b2b2"/>
<path d="M11.40 14.40 Q12.63 18.77 17.00 20.00 Q12.63 21.23 11.40 25.60 Q10.17 21.23 5.80 20.00 Q10.17 18.77 11.40 14.40 Z" fill="#1a1a1a"/><path d="M15.90 12.70 Q16.47 14.73 18.50 15.30 Q16.47 15.87 15.90 17.90 Q15.33 15.87 13.30 15.30 Q15.33 14.73 15.90 12.70 Z" fill="#1a1a1a"/></svg><div class="tl" style="left:792.00px;top:1006px;color:#cfcfcf;letter-spacing:0.167px">Start Summary</div><svg class="ab" style="left:947px;top:970px" width="32" height="32" viewBox="0 0 32 32">
<path d="M14.80 2.90 Q17.90 13.90 28.90 17.00 Q17.90 20.10 14.80 31.10 Q11.70 20.10 0.70 17.00 Q11.70 13.90 14.80 2.90 Z" fill="#b2b2b2"/><path d="M26.00 1.20 Q27.44 4.56 30.80 6.00 Q27.44 7.44 26.00 10.80 Q24.56 7.44 21.20 6.00 Q24.56 4.56 26.00 1.20 Z" fill="#b2b2b2"/></svg><div class="tl" style="left:915.80px;top:1006px;color:#cfcfcf;letter-spacing:0.055px">AI Companion</div><svg class="ab" style="left:1079px;top:970px" width="58" height="27" viewBox="0 0 58 27">
<rect x="0.5" y="0.3" width="25" height="25.5" rx="3.5" fill="#b2b2b2"/><rect x="7.5" y="8" width="2.7" height="9.8" fill="#1a1a1a"/><rect x="15" y="8" width="2.7" height="9.8" fill="#1a1a1a"/>
<rect x="31.5" y="0.3" width="25" height="25.5" rx="3.5" fill="#b2b2b2"/><rect x="39" y="8" width="9.8" height="9.8" rx="1.2" fill="#1a1a1a"/></svg><div class="tl" style="left:1032.30px;top:1007px;color:#cfcfcf;letter-spacing:0.042px">Pause/Stop Recording</div><svg class="ab" style="left:1230px;top:969px" width="32" height="30" viewBox="0 0 32 30">
<circle cx="13" cy="17" r="11.2" fill="#b2b2b2"/>
<path d="M23.5 1.5 V12 M18.2 6.8 H28.8" stroke="#1a1a1a" stroke-width="4.5"/>
<path d="M23.5 2 V11.5 M18.7 6.8 H28.3" stroke="#b2b2b2" stroke-width="1.8"/>
<circle cx="9.5" cy="15.5" r="1.6" fill="#1a1a1a"/><circle cx="16.5" cy="15.5" r="1.6" fill="#1a1a1a"/>
<path d="M8 19.5 Q13 23.5 18 19.5" stroke="#1a1a1a" stroke-width="1.8" fill="none" stroke-linecap="round"/></svg><div class="tl" style="left:1210.20px;top:1006px;color:#cfcfcf;letter-spacing:-0.175px">Reactions</div><svg class="ab" style="left:1272px;top:982px" width="11" height="8" viewBox="0 0 11 8"><path d="M1 6.5 L5.5 2 L10 6.5" stroke="#b2b2b2" stroke-width="1.8" fill="none"/></svg><svg class="ab" style="left:1331px;top:976px" width="24" height="23" viewBox="0 0 24 23">
<path d="M12 3 H6 Q2.5 3 2.5 6.5 V11" stroke="#b2b2b2" stroke-width="1.8" fill="none"/>
<path d="M21 11.5 V17 Q21 20.5 17.5 20.5 H11" stroke="#b2b2b2" stroke-width="1.8" fill="none"/>
<circle cx="18" cy="5" r="3.3" stroke="#b2b2b2" stroke-width="1.8" fill="none"/>
<circle cx="5.5" cy="17.2" r="3.3" stroke="#b2b2b2" stroke-width="1.8" fill="none"/></svg><div class="tl" style="left:1326.70px;top:1006px;color:#cfcfcf;letter-spacing:-0.267px">Apps</div><svg class="ab" style="left:1374px;top:982px" width="11" height="8" viewBox="0 0 11 8"><path d="M1 6.5 L5.5 2 L10 6.5" stroke="#b2b2b2" stroke-width="1.8" fill="none"/></svg><svg class="ab" style="left:1440px;top:973px" width="28" height="24" viewBox="0 0 28 24">
<path d="M9 19.5 H6 Q2.5 19.5 2.5 16 V5 Q2.5 1.8 6 1.8 H22 Q25.5 1.8 25.5 5 V16" stroke="#b2b2b2" stroke-width="1.8" fill="none"/>
<path d="M10.5 20 L13.5 17.5 H24.5 Q26.5 17.5 26.5 19.8 Q26.5 22 24.5 22 H13.5 Z" fill="#b2b2b2"/></svg><div class="tl" style="left:1411.60px;top:1006px;color:#cfcfcf;letter-spacing:0.240px">Whiteboards</div><svg class="ab" style="left:1495px;top:982px" width="11" height="8" viewBox="0 0 11 8"><path d="M1 6.5 L5.5 2 L10 6.5" stroke="#b2b2b2" stroke-width="1.8" fill="none"/></svg><svg class="ab" style="left:1566px;top:974px" width="25" height="26" viewBox="0 0 25 26">
<path d="M8 23 H6 Q3 23 3 20 V3.5 Q3 1 5.5 1 H18 Q20.8 1 20.8 3.5 V17" stroke="#b2b2b2" stroke-width="1.6" fill="none"/>
<path d="M1 5 H3.5 M1 8 H3.5 M1 11 H3.5 M1 14 H3.5 M1 17 H3.5" stroke="#b2b2b2" stroke-width="1.2"/>
<path d="M8 5.5 H17 M8 9.5 H17 M8 13.2 H12.5" stroke="#b2b2b2" stroke-width="1.6"/>
<path d="M9.5 22.5 L12 20 H22 Q23.6 20 23.6 21.9 Q23.6 24.5 22 24.5 H12 Z" fill="#b2b2b2"/></svg><div class="tl" style="left:1557.20px;top:1006px;color:#cfcfcf;letter-spacing:0.150px">Notes</div><svg class="ab" style="left:1618px;top:982px" width="11" height="8" viewBox="0 0 11 8"><path d="M1 6.5 L5.5 2 L10 6.5" stroke="#b2b2b2" stroke-width="1.8" fill="none"/></svg><svg class="ab" style="left:1677px;top:982px" width="28" height="8" viewBox="0 0 28 8">
<circle cx="5" cy="4" r="2.6" fill="#b2b2b2"/><circle cx="14.8" cy="4" r="2.6" fill="#b2b2b2"/><circle cx="24.8" cy="4" r="2.6" fill="#b2b2b2"/></svg><div class="tl" style="left:1672.50px;top:1006px;color:#cfcfcf;letter-spacing:1.200px">More</div><div class="ab" style="left:1828px;top:980px;width:77px;height:33px;background:#b9262a;border-radius:7px;color:#fff;font-weight:bold;font-size:15px;line-height:33px;text-align:center;font-family:'Liberation Sans',sans-serif;">End</div>

<!-- taskbar -->
<div class="ab" style="left:0;top:1030px;width:1920px;height:50px;background:linear-gradient(90deg,#223a43 0%,#21353f 40%,#1c2c40 75%,#1b2840 100%)"></div>
<!-- start -->
<svg class="ab" style="left:19px;top:1044px" width="22" height="22" viewBox="0 0 22 22">
<path d="M0.5 3.2 L9.8 1.9 V10.3 H0.5 Z M11 1.7 L21.5 0.3 V10.3 H11 Z M0.5 11.5 H9.8 V19.9 L0.5 18.6 Z M11 11.5 H21.5 V21.5 L11 20.1 Z" fill="#fff"/></svg>
<!-- search -->
<svg class="ab" style="left:75px;top:1040px" width="30" height="30" viewBox="0 0 30 30">
<circle cx="17.5" cy="12" r="10" stroke="#fff" stroke-width="2.6" fill="none"/><path d="M10.5 19 L2.5 27" stroke="#fff" stroke-width="3" stroke-linecap="round"/></svg>
<!-- task view -->
<svg class="ab" style="left:139px;top:1044px" width="22" height="21" viewBox="0 0 22 21">
<path d="M0.7 0.5 V2.8 H13.3 V0.5 M0.7 20.5 V18.2 H13.3 V20.5" stroke="#fff" stroke-width="1.2" fill="none"/>
<rect x="0.7" y="5.2" width="12.6" height="10.6" stroke="#fff" stroke-width="1.2" fill="none"/>
<path d="M19.3 0.5 V20.5" stroke="#fff" stroke-width="1.2"/><rect x="17.8" y="8" width="3" height="3" fill="#fff"/></svg>
<!-- calculator -->
<svg class="ab" style="left:202px;top:1040px" width="23" height="30" viewBox="0 0 23 30">
<rect x="0" y="0" width="23" height="30" rx="2" fill="#6b737c"/>
<rect x="2.8" y="3" width="17.4" height="5.2" fill="#3bd1f5"/>
<g fill="#d5d9de"><rect x="2.8" y="10.6" width="4.6" height="4.6"/><rect x="9.2" y="10.6" width="4.6" height="4.6"/><rect x="15.6" y="10.6" width="4.6" height="4.6"/>
<rect x="2.8" y="16.8" width="4.6" height="4.6"/><rect x="9.2" y="16.8" width="4.6" height="4.6"/>
<rect x="2.8" y="23" width="4.6" height="4.6"/><rect x="9.2" y="23" width="4.6" height="4.6"/></g>
<rect x="15.6" y="16.8" width="4.6" height="10.8" fill="#173f8c"/></svg>
<!-- whatsapp -->
<svg class="ab" style="left:259px;top:1039px" width="34" height="33" viewBox="0 0 34 33">
<path d="M17 2.5 A13.5 13.5 0 1 1 9.5 27.5 L3 29.5 L5 23.5 A13.5 13.5 0 0 1 17 2.5 Z" stroke="#25d366" stroke-width="2.6" fill="none" stroke-linejoin="round"/>
<path d="M10.8 9.2 Q12.2 7.8 13.2 9.5 L14.2 11.8 Q14.5 12.8 13.4 13.8 Q15 17.6 19 19.6 Q20.2 18.4 21 18.8 L23.4 20 Q24.6 20.8 23.4 22.2 Q21.8 23.8 19.6 23.2 Q12.6 20.8 10 13.8 Q9.4 11 10.8 9.2 Z" fill="#25d366"/></svg>
<div class="ab" style="left:281.5px;top:1054.5px;width:20.5px;height:20.5px;border-radius:50%;background:#2a2f31;border:1px solid #7c8286;color:#fff;font-weight:bold;font-size:14px;line-height:18.5px;text-align:center">7</div>
<div class="ab" style="left:251px;top:1077px;width:51px;height:3px;background:#76b9ed;border-radius:1px"></div>
<!-- snipping -->
<svg class="ab" style="left:323px;top:1040px" width="30" height="30" viewBox="0 0 30 30">
<ellipse cx="11" cy="14.5" rx="10" ry="4.8" transform="rotate(-22 11 14.5)" fill="#8b9198"/>
<ellipse cx="14" cy="9" rx="11.8" ry="6" transform="rotate(-22 14 9)" fill="#f2f2f2" stroke="#e03a3a" stroke-width="1.2"/>
<path d="M13 4 L16.5 16 M6 11 L16 15" stroke="#8a8f95" stroke-width="1.2"/>
<path d="M17 16 Q22 13 24.5 16 Q25.5 19 21 19 Z M16 17 Q14.5 24 17 27.5 Q20 28 19 21 Z" stroke="#1b8de0" stroke-width="1.6" fill="none"/></svg>
<!-- edge -->
<svg class="ab" style="left:384px;top:1039px" width="32" height="32" viewBox="0 0 32 32">
<defs><linearGradient id="eg1" x1="0" y1="0" x2="1" y2="1"><stop offset="0" stop-color="#1fb0e0"/><stop offset="0.6" stop-color="#2fc9a0"/><stop offset="1" stop-color="#6ad66a"/></linearGradient>
<linearGradient id="eg2" x1="0" y1="0" x2="0" y2="1"><stop offset="0" stop-color="#0f7fd8"/><stop offset="1" stop-color="#0a4fa8"/></linearGradient></defs>
<path d="M2 15 Q3 1 16 1 Q30 1 31 14 Q31 20 25 20 L15 20 Q13 18 15 15 Q18 11 14 9 Q6 7 2 15 Z" fill="url(#eg1)"/>
<path d="M2 15 Q6 7 14 9 Q11 10 10 14 Q9 22 17 25 Q23 27 28 23 Q24 31 15 31 Q3 30 2 15 Z" fill="url(#eg2)"/>
<circle cx="16" cy="15" r="3" fill="#22333c"/>
<rect x="1" y="20" width="15" height="11" rx="1.2" fill="#d98218"/><rect x="1" y="20" width="15" height="4.5" fill="#f0a030"/>
<path d="M6 20 V18.5 H11 V20" stroke="#8a5010" stroke-width="1.2" fill="none"/><rect x="7.8" y="23.5" width="1.5" height="2" fill="#ffe680"/></svg>
<!-- explorer -->
<svg class="ab" style="left:447px;top:1042px" width="30" height="25" viewBox="0 0 30 25">
<path d="M1 3 Q1 1 3 1 H10.5 L13 3 H27 Q29 3 29 5 V22 Q29 24 27 24 H3 Q1 24 1 22 Z" fill="#e8b43a"/>
<path d="M1 6 H29 V22 Q29 24 27 24 H3 Q1 24 1 22 Z" fill="#fbd667"/>
<path d="M8 24 V15 Q8 12.5 10.5 12.5 H20 Q22.5 12.5 22.5 15 V24 H19 V16.5 H11.5 V24 Z" fill="#3a8ee6"/></svg>
<!-- store -->
<svg class="ab" style="left:508px;top:1040px" width="31" height="31" viewBox="0 0 31 31">
<path d="M9.5 6 V2.5 Q9.5 1 11 1 H20 Q21.5 1 21.5 2.5 V6" stroke="#1ea7f0" stroke-width="1.8" fill="none"/>
<path d="M1 6 H30 V26 Q30 30 26 30 H5 Q1 30 1 26 Z" fill="#f7f7f7"/>
<rect x="9.5" y="12" width="5.4" height="5.4" fill="#f05023"/><rect x="16" y="12" width="5.4" height="5.4" fill="#7fba00"/>
<rect x="9.5" y="18.5" width="5.4" height="5.4" fill="#00a4ef"/><rect x="16" y="18.5" width="5.4" height="5.4" fill="#ffb900"/></svg>
<!-- mail -->
<svg class="ab" style="left:570px;top:1040px" width="32" height="30" viewBox="0 0 32 30">
<path d="M1 9.5 L16 1 L31 9.5 V28 H1 Z" fill="#0a62c0"/>
<path d="M4 10 H28 L16 19 Z" fill="#e8eef5"/>
<path d="M1 9.5 L16 20 L31 9.5 V28 H1 Z" fill="#2aa0ec"/>
<path d="M1 28 L16 17 L31 28 Z" fill="#47b8f8" opacity="0.7"/></svg>
<!-- mpc 321 -->
<svg class="ab" style="left:633px;top:1040px" width="30" height="30" viewBox="0 0 30 30">
<path d="M1 6 L27 1 L28 5 L2 10 Z" fill="#111"/><path d="M5 5.2 L8 4.6 L6 9.2 L3 9.8 Z M12 3.9 L15 3.3 L13 8 L10 8.5 Z M19 2.6 L22 2 L20 6.6 L17 7.2 Z" fill="#fff"/>
<rect x="2" y="10" width="26" height="19" fill="#fff" stroke="#111" stroke-width="1"/>
<text x="3.5" y="26" font-family="Liberation Sans" font-weight="bold" font-size="14" fill="#d65a1a">3</text>
<text x="11.5" y="26" font-family="Liberation Sans" font-weight="bold" font-size="14" fill="#3a78d0">2</text>
<text x="19.5" y="26" font-family="Liberation Sans" font-weight="bold" font-size="14" fill="#2a9a3a">1</text></svg>
<!-- green pencil app -->
<svg class="ab" style="left:694px;top:1039px" width="32" height="32" viewBox="0 0 32 32">
<defs><linearGradient id="gp" x1="0" y1="0" x2="0" y2="1"><stop offset="0" stop-color="#19ff2a"/><stop offset="1" stop-color="#0a8a1a"/></linearGradient></defs>
<path d="M7 1 H31 V22 Q31 31 22 31 H9 Q1 31 1 23 V8 Q1 1 7 1 Z" fill="url(#gp)"/>
<path d="M7 7 L25 25 L28 31 H9 Q1 31 1 23 V13 Z" fill="#0a5a12" opacity="0.55"/>
<path d="M8 7 L24 23" stroke="#e8e8e8" stroke-width="3.4" stroke-linecap="round"/></svg>
<!-- photoshop -->
<div class="ab" style="left:758px;top:1041px;width:27.5px;height:26px;border-radius:4px;background:#001e36;color:#31a8ff;font-weight:bold;font-size:15px;line-height:26px;text-align:center;letter-spacing:-0.5px">Ps</div>
<!-- chrome -->
<svg class="ab" style="left:818px;top:1039px" width="32" height="32" viewBox="0 0 32 32">
<circle cx="16" cy="16" r="15" fill="#1e9e4a"/>
<path d="M16 1 A15 15 0 0 1 29 8.5 L16 8.5 A7.5 7.5 0 0 0 9.5 12.2 L3 8.5 A15 15 0 0 1 16 1 Z" fill="#e33b2e"/>
<path d="M29 8.5 A15 15 0 0 1 16 31 L22.5 19.7 A7.5 7.5 0 0 0 16 8.5 Z" fill="#fbc02d"/>
<circle cx="16" cy="16" r="7" fill="#fff"/><circle cx="16" cy="16" r="5.5" fill="#3b82f0"/></svg>
<!-- excel -->
<svg class="ab" style="left:881px;top:1040px" width="30" height="29" viewBox="0 0 30 29">
<rect x="7" y="1" width="22.5" height="27" rx="1.5" fill="#1f9a55"/><rect x="18" y="1" width="11.5" height="9" fill="#33c481"/><rect x="7" y="10" width="22.5" height="9" fill="#21a366"/><rect x="7" y="19" width="22.5" height="9" rx="1" fill="#107c41"/>
<rect x="0.5" y="7" width="15" height="15" rx="1.5" fill="#107c41"/>
<text x="3.5" y="19" font-family="Liberation Sans" font-weight="bold" font-size="12" fill="#fff">x</text></svg>
<!-- word -->
<svg class="ab" style="left:943px;top:1040px" width="30" height="29" viewBox="0 0 30 29">
<rect x="7" y="1" width="22.5" height="27" rx="1.5" fill="#2b7cd3"/><rect x="7" y="1" width="22.5" height="9" fill="#41a5ee"/><rect x="7" y="10" width="22.5" height="9" fill="#2b7cd3"/><rect x="7" y="19" width="22.5" height="9" rx="1" fill="#185abd"/>
<rect x="0.5" y="7" width="15" height="15" rx="1.5" fill="#185abd"/>
<text x="1.8" y="19" font-family="Liberation Sans" font-weight="bold" font-size="12" fill="#fff">W</text></svg>
<!-- nitro -->
<svg class="ab" style="left:1005px;top:1040px" width="30" height="30" viewBox="0 0 30 30">
<rect x="0" y="0" width="30" height="30" fill="#e94e1b"/>
<path d="M6 17 L12 6 L16 8 L13 16 Z M17 5 L24 7 L22 15 L17 24 L12 25 L16 16 Z M8 19 L12 17 L12 25 Z" fill="#fff"/></svg>
<!-- purple -->
<div class="ab" style="left:1067px;top:1040px;width:30px;height:30px;border-radius:8px;background:#8c5cf0"></div>
<div class="ab" style="left:1072.5px;top:1045.5px;width:19px;height:19px;border-radius:50%;border:3px solid #fff;background:#8c5cf0"></div>
<!-- openvpn -->
<svg class="ab" style="left:1128px;top:1040px" width="31" height="31" viewBox="0 0 31 31">
<circle cx="15.5" cy="15" r="14.8" fill="#fff"/>
<path d="M8.5 22 A9.5 9.5 0 1 1 22.5 22" stroke="#ea7e20" stroke-width="3.6" fill="none"/>
<path d="M13 26 L14 18.5 A3.3 3.3 0 1 1 17 18.5 L18 26 Z" fill="#1b2f5e"/></svg>
<div class="ab" style="left:1119px;top:1077px;width:51px;height:3px;background:#76b9ed;border-radius:1px"></div>
<!-- chrome profile -->
<svg class="ab" style="left:1190px;top:1039px" width="34" height="34" viewBox="0 0 34 34">
<circle cx="16" cy="16" r="15" fill="#1e9e4a"/>
<path d="M16 1 A15 15 0 0 1 29 8.5 L16 8.5 A7.5 7.5 0 0 0 9.5 12.2 L3 8.5 A15 15 0 0 1 16 1 Z" fill="#e33b2e"/>
<path d="M29 8.5 A15 15 0 0 1 16 31 L22.5 19.7 A7.5 7.5 0 0 0 16 8.5 Z" fill="#fbc02d"/>
<circle cx="16" cy="16" r="7" fill="#fff"/><circle cx="16" cy="16" r="5.5" fill="#3b82f0"/>
<circle cx="23" cy="23.5" r="9.5" fill="#c9c2c4"/><circle cx="23" cy="23.5" r="8" fill="#e3d6d8"/><ellipse cx="23" cy="26" rx="4" ry="6" fill="#b0a6aa"/><circle cx="22" cy="20" r="2.8" fill="#f0e4e0"/></svg>
<div class="ab" style="left:1181px;top:1077px;width:51px;height:3px;background:#76b9ed;border-radius:1px"></div>
<!-- notepad -->
<svg class="ab" style="left:1252px;top:1040px" width="30" height="30" viewBox="0 0 30 30">
<path d="M8 2 L26 3 L28 26 L8 24 Z" fill="#c8a040"/>
<path d="M7 3 L25 3.5 L27 25 L3 27 Z" fill="#d8e6ee"/>
<path d="M7 3 L25 3.5 L20 22 L1.5 26 Z" fill="#6cb8cc"/>
<path d="M7 3 L25 3.5 L22 12 L4 14 Z" fill="#a8dcea" opacity="0.7"/>
<path d="M8 1.5 H25 V4 H8 Z" fill="#808890"/></svg>
<div class="ab" style="left:1243px;top:1077px;width:51px;height:3px;background:#76b9ed;border-radius:1px"></div>
<!-- zoom active -->
<div class="ab" style="left:1300px;top:1030px;width:56px;height:50px;background:#4a5562"></div>
<div class="ab" style="left:1356px;top:1030px;width:1px;height:50px;background:#2b343e"></div>
<div class="ab" style="left:1357px;top:1030px;width:4px;height:50px;background:#3c4550"></div>
<div class="ab" style="left:1314.8px;top:1039.8px;width:30.4px;height:30.3px;border-radius:42%;background:linear-gradient(160deg,#2f7bff,#0b5cff 45%,#0848d0);color:#fff;font-weight:bold;font-size:9px;line-height:30px;text-align:center;letter-spacing:-0.4px">zoom</div>
<div class="ab" style="left:1300px;top:1077px;width:56px;height:3px;background:#76b6ea"></div>
<div class="ab" style="left:1357px;top:1077px;width:4px;height:3px;background:#5a86ac"></div>
<!-- tray: weather -->
<svg class="ab" style="left:1478px;top:1042px" width="34" height="32" viewBox="0 0 34 32"><defs><linearGradient id="wcl" x1="0" y1="0" x2="0" y2="1"><stop offset="0" stop-color="#b4cdf2"/><stop offset="0.6" stop-color="#dfe9f8"/><stop offset="1" stop-color="#9fb8e8"/></linearGradient><linearGradient id="wdrop" x1="0" y1="0" x2="1" y2="1"><stop offset="0" stop-color="#5aa8ff"/><stop offset="1" stop-color="#1a6cf0"/></linearGradient></defs><g fill="url(#wcl)"><ellipse cx="9" cy="14.5" rx="7" ry="6"/><circle cx="16.5" cy="9" r="7.2"/><circle cx="25" cy="13.5" r="7"/><rect x="4" y="13" width="26" height="7.7" rx="3.5"/></g><path d="M13.9 7.3 Q19.4 10.4 19.4 14 A3 3 0 1 1 13.399999999999999 14 Q13.399999999999999 9.5 13.9 7.3 Z" fill="url(#wdrop)" stroke="#1c2a3f" stroke-width="0.9"/><path d="M9.8 15.3 Q16.4 19.8 16.4 24 A3.5 3.5 0 1 1 9.4 24 Q9.4 18.75 9.8 15.3 Z" fill="url(#wdrop)" stroke="#1c2a3f" stroke-width="0.9"/><path d="M21.3 14.4 Q29.700000000000003 19.82 29.700000000000003 25.1 A4.4 4.4 0 1 1 20.9 25.1 Q20.9 18.5 21.3 14.4 Z" fill="url(#wdrop)" stroke="#1c2a3f" stroke-width="0.9"/></svg>
<div class="ab" style="left:1520px;top:1045px;font-size:17.2px;line-height:22px;color:#fff">27°C</div>
<svg class="ab" style="left:1588px;top:1049px" width="18" height="11" viewBox="0 0 18 11"><path d="M1 10 L9 2 L17 10" stroke="#fff" stroke-width="1.3" fill="none"/></svg>
<svg class="ab" style="left:1620px;top:1045px" width="17" height="20" viewBox="0 0 17 20">
<path d="M4 3 Q8 0.5 12 3 M4 17 Q8 19.5 12 17" stroke="#fff" stroke-width="1" fill="none"/>
<rect x="1" y="6" width="9.5" height="8.5" rx="1.5" stroke="#fff" stroke-width="1.1" fill="none"/><path d="M11 9 L15.5 6.5 V14 L11 11.5" stroke="#fff" stroke-width="1.1" fill="none"/></svg>
<svg class="ab" style="left:1649px;top:1044px" width="15" height="22" viewBox="0 0 15 22">
<rect x="4" y="0.5" width="7" height="14" rx="3.5" fill="#fff"/><path d="M1 10 Q1 17 7.5 17 Q14 17 14 10" stroke="#fff" stroke-width="1.1" fill="none"/><path d="M7.5 17 V21 M3.5 21 H11.5" stroke="#fff" stroke-width="1.1"/></svg>
<svg class="ab" style="left:1677px;top:1049px" width="21" height="13" viewBox="0 0 21 13">
<rect x="0.6" y="1.6" width="17.5" height="10" rx="1.5" stroke="#fff" stroke-width="1.1" fill="none"/><rect x="2.5" y="3.5" width="5" height="6.2" fill="#fff"/><rect x="18.5" y="4.5" width="1.8" height="4.2" fill="#fff"/></svg>
<svg class="ab" style="left:1709px;top:1046px" width="18" height="18" viewBox="0 0 18 18">
<path d="M1.5 17 Q1.5 2 16.5 1.5 M5 17 Q5 5.5 16.5 5 M8.5 17 Q8.5 9 16.5 8.5" stroke="#9aa3ac" stroke-width="1.1" fill="none"/><path d="M8.5 17 Q8.5 9 16.5 8.5" stroke="#fff" stroke-width="1.1" fill="none"/>
<circle cx="14" cy="15" r="1.8" fill="#fff"/></svg>
<svg class="ab" style="left:1736px;top:1045px" width="23" height="20" viewBox="0 0 23 20">
<path d="M1 7 H5 L10 2 V18 L5 13 H1 Z" stroke="#fff" stroke-width="1.1" fill="none"/>
<path d="M13 7 Q15 10 13 13 M16 4.5 Q19.5 10 16 15.5 M19 2 Q24 10 19 18" stroke="#fff" stroke-width="1.1" fill="none"/></svg>
<div class="ab" style="left:1760px;top:1034.5px;width:96px;text-align:center;font-size:14.8px;line-height:18px;color:#fff">19:19</div>
<div class="ab" style="left:1760px;top:1057px;width:96px;text-align:center;font-size:15.5px;line-height:18px;color:#fff">23/02/2024</div>
<svg class="ab" style="left:1868px;top:1044px" width="23" height="22" viewBox="0 0 23 22">
<path d="M1 1 H21.5 V15 H8 L4 19 V15 H1 Z" fill="#fff"/><path d="M4.5 5 H18 M4.5 8 H18 M4.5 11 H14" stroke="#1c2a3c" stroke-width="1.1"/></svg>
<div class="ab" style="left:1877.5px;top:1053.5px;width:22px;height:22px;border-radius:50%;background:#23292f;border:1px solid #7a8086;color:#fff;font-weight:bold;font-size:14px;line-height:20px;text-align:center">3</div>
<div class="ab" style="left:1914px;top:1030px;width:1px;height:50px;background:#5a6470"></div>

</body></html>
